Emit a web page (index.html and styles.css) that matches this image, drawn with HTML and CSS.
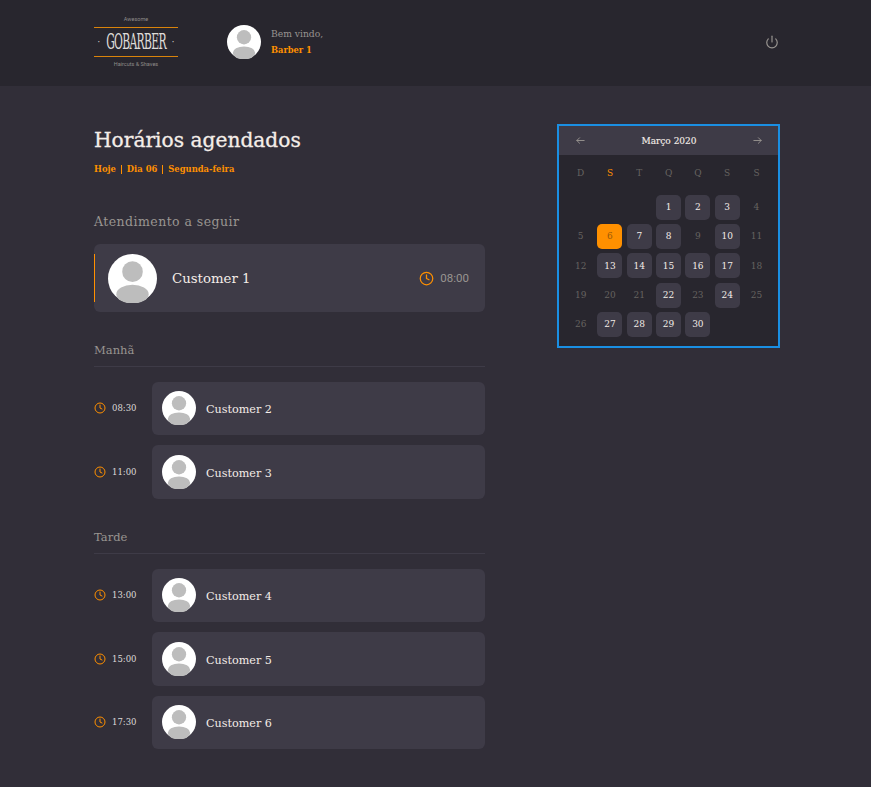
FILE: index.html
```html
<!DOCTYPE html>
<html lang="pt-BR">
<head>
  <meta charset="UTF-8" />
  <title>GoBarber</title>
  <link rel="stylesheet" href="styles.css">
</head>
<body>
  <svg class="defs" width="0" height="0">
    <symbol id="avatar" viewBox="0 0 100 100">
      <circle cx="50" cy="50" r="50" fill="#fff"/>
      <circle cx="50" cy="36" r="21" fill="#bdbdbd"/>
      <ellipse cx="50" cy="82" rx="33" ry="19" fill="#bdbdbd"/>
    </symbol>
    <symbol id="clock" viewBox="0 0 24 24">
      <circle cx="12" cy="12" r="10" fill="none" stroke="#ff9000" stroke-width="2"/>
      <path d="M12 6v6l4 2" fill="none" stroke="#ff9000" stroke-width="2" stroke-linecap="round" stroke-linejoin="round"/>
    </symbol>
  </svg>

  <header class="header">
    <div class="header-inner">
      <div class="logo">
        <span class="logo-top">Awesome</span>
        <div class="logo-name"><i>·</i><b>GOBARBER</b><i>·</i></div>
        <span class="logo-bottom">Haircuts &amp; Shaves</span>
      </div>
      <svg class="header-avatar"><use href="#avatar"/></svg>
      <div class="welcome">
        <span>Bem vindo,</span>
        <strong>Barber 1</strong>
      </div>
      <svg class="power" viewBox="0 0 24 24" fill="none" stroke="#999591" stroke-width="2" stroke-linecap="round" stroke-linejoin="round">
        <path d="M18.36 6.64a9 9 0 1 1-12.73 0"/>
        <path d="M12 2v10"/>
      </svg>
    </div>
  </header>

  <main class="content">
    <section class="schedule">
      <h1>Horários agendados</h1>
      <p class="today"><span>Hoje</span><span>Dia 06</span><span>Segunda-feira</span></p>

      <h4 class="next-title">Atendimento a seguir</h4>
      <div class="next">
        <svg class="next-avatar"><use href="#avatar"/></svg>
        <strong>Customer 1</strong>
        <span class="next-time"><svg class="clock-big"><use href="#clock"/></svg>08:00</span>
      </div>

      <h5 class="period">Manhã</h5>
      <div class="appointment">
        <span class="time"><svg class="clock"><use href="#clock"/></svg>08:30</span>
        <div class="card"><svg class="card-avatar"><use href="#avatar"/></svg><strong>Customer 2</strong></div>
      </div>
      <div class="appointment">
        <span class="time"><svg class="clock"><use href="#clock"/></svg>11:00</span>
        <div class="card"><svg class="card-avatar"><use href="#avatar"/></svg><strong>Customer 3</strong></div>
      </div>

      <h5 class="period period-afternoon">Tarde</h5>
      <div class="appointment">
        <span class="time"><svg class="clock"><use href="#clock"/></svg>13:00</span>
        <div class="card"><svg class="card-avatar"><use href="#avatar"/></svg><strong>Customer 4</strong></div>
      </div>
      <div class="appointment">
        <span class="time"><svg class="clock"><use href="#clock"/></svg>15:00</span>
        <div class="card"><svg class="card-avatar"><use href="#avatar"/></svg><strong>Customer 5</strong></div>
      </div>
      <div class="appointment">
        <span class="time"><svg class="clock"><use href="#clock"/></svg>17:30</span>
        <div class="card"><svg class="card-avatar"><use href="#avatar"/></svg><strong>Customer 6</strong></div>
      </div>
    </section>

    <aside class="calendar">
      <div class="cal-head">
        <svg class="arrow" viewBox="0 0 24 24" fill="none" stroke="#999591" stroke-width="2" stroke-linecap="round" stroke-linejoin="round"><path d="M20 12H4M10 6l-6 6 6 6"/></svg>
        <span>Março 2020</span>
        <svg class="arrow" viewBox="0 0 24 24" fill="none" stroke="#999591" stroke-width="2" stroke-linecap="round" stroke-linejoin="round"><path d="M4 12h16M14 6l6 6-6 6"/></svg>
      </div>
      <div class="cal-week">
        <span>D</span><span class="week-today">S</span><span>T</span><span>Q</span><span>Q</span><span>S</span><span>S</span>
      </div>
      <div class="cal-days">
        <span></span><span></span><span></span>
        <span class="on">1</span><span class="on">2</span><span class="on">3</span><span>4</span>
        <span>5</span><span class="selected">6</span><span class="on">7</span><span class="on">8</span><span>9</span><span class="on">10</span><span>11</span>
        <span>12</span><span class="on">13</span><span class="on">14</span><span class="on">15</span><span class="on">16</span><span class="on">17</span><span>18</span>
        <span>19</span><span>20</span><span>21</span><span class="on">22</span><span>23</span><span class="on">24</span><span>25</span>
        <span>26</span><span class="on">27</span><span class="on">28</span><span class="on">29</span><span class="on">30</span>
      </div>
    </aside>
  </main>
</body>
</html>
```

FILE: styles.css
```css
* {
  box-sizing: border-box;
}

body {
  margin: 0;
  background-color: #312e38;
  color: #f4ede8;
  font-family: "DejaVu Serif", "Liberation Serif", serif;
}

.defs {
  position: absolute;
}

/* header */
.header {
  height: 86px;
  background-color: #28262e;
  padding: 0 92px 2px 94px;
}

.header-inner {
  height: 100%;
  display: flex;
  align-items: center;
}

.logo {
  width: 84px;
  display: flex;
  flex-direction: column;
  align-items: center;
  color: #8f8c8a;
  font-size: 5.5px;
  line-height: 7px;
  font-family: Roboto, sans-serif;
}

.logo-name {
  width: 100%;
  height: 30px;
  margin: 4px 0;
  border-top: 1px solid #d9830b;
  border-bottom: 1px solid #d9830b;
  display: flex;
  align-items: center;
  justify-content: center;
  gap: 6px;
  color: #dedbd8;
}

.logo-name i {
  font-style: normal;
  font-size: 10px;
}

.logo-name b {
  font-family: "DejaVu Serif Condensed", "DejaVu Serif", serif;
  font-weight: 400;
  font-size: 12px;
  letter-spacing: -0.7px;
  transform: scaleY(1.8);
}

.header-avatar {
  width: 34px;
  height: 34px;
  margin-left: 49px;
}

.welcome {
  margin-left: 10px;
  display: flex;
  flex-direction: column;
  gap: 4px;
  font-size: 9.2px;
  line-height: 13px;
  color: #999591;
}

.welcome strong {
  color: #ff9000;
  font-size: 8.3px;
  font-weight: 700;
}

.power {
  width: 14px;
  height: 14px;
  margin-left: auto;
}

/* page */
.content {
  display: flex;
  align-items: flex-start;
  justify-content: space-between;
  padding: 37px 91px 0 94px;
}

.schedule {
  width: 391px;
}

h1 {
  margin: 4px 0 0;
  font-size: 20.2px;
  line-height: 27px;
  font-weight: 400;
  -webkit-text-stroke: 0.3px #f4ede8;
}

.today {
  margin: 8px 0 0;
  display: flex;
  color: #ff9000;
  font-size: 8.4px;
  line-height: 14px;
  font-weight: 700;
}

.today span + span {
  margin-left: 5px;
  padding-left: 6px;
  position: relative;
}

.today span + span::before {
  content: "";
  position: absolute;
  left: 0;
  top: 3px;
  height: 9px;
  border-left: 1px solid #ff9000;
}

.next-title {
  margin: 38px 0 0;
  font-size: 12.5px;
  line-height: 16px;
  letter-spacing: 0.45px;
  font-weight: 400;
  color: #999591;
}

.next {
  margin-top: 14px;
  height: 68px;
  border-radius: 6px;
  background-color: #3e3b47;
  display: flex;
  align-items: center;
  padding: 0 16px 0 14px;
  position: relative;
}

.next::before {
  content: "";
  position: absolute;
  left: 0;
  top: 10px;
  bottom: 10px;
  border-left: 1px solid #ff9000;
}

.next-avatar {
  width: 49px;
  height: 49px;
}

.next strong {
  margin-left: 15px;
  font-size: 13.3px;
  font-weight: 400;
}

.next-time {
  margin-left: auto;
  display: flex;
  align-items: center;
  gap: 6px;
  color: #999591;
  font-family: Roboto, sans-serif;
  font-size: 11.5px;
}

.clock-big {
  width: 15px;
  height: 15px;
}

.period {
  margin: 30px 0 0;
  padding-bottom: 8px;
  border-bottom: 1px solid #3e3b47;
  font-size: 11.5px;
  line-height: 16px;
  font-weight: 400;
  color: #999591;
}

.period-afternoon {
  margin-top: 30.5px;
}

.appointment {
  display: flex;
  align-items: center;
  margin-top: 10px;
}

.period + .appointment {
  margin-top: 14.5px;
}

.time {
  width: 58px;
  display: flex;
  align-items: center;
  gap: 6px;
  font-size: 8.5px;
  color: #dedbd8;
}

.clock {
  width: 12px;
  height: 12px;
}

.card {
  flex: 1;
  height: 53.5px;
  border-radius: 6px;
  background-color: #3e3b47;
  display: flex;
  align-items: center;
  padding-left: 10px;
}

.card-avatar {
  width: 34px;
  height: 34px;
}

.card strong {
  margin: 3px 0 0 10px;
  font-size: 11.2px;
  font-weight: 400;
}

/* calendar */
.calendar {
  width: 223px;
  height: 224px;
  background-color: #28262e;
  border: 2px solid #1a8fe3;
  margin-top: 1px;
}

.cal-head {
  height: 29px;
  background-color: #3e3b47;
  display: flex;
  align-items: center;
  justify-content: space-between;
  padding: 0 15px 0 16px;
  font-size: 9px;
  color: #f4ede8;
}

.cal-head span {
  -webkit-text-stroke: 0.15px #f4ede8;
}

.arrow {
  width: 11px;
  height: 11px;
}

.cal-week,
.cal-days {
  display: grid;
  grid-template-columns: repeat(7, 25px);
  column-gap: 4.3px;
  padding-left: 9.2px;
  justify-items: center;
}

.cal-week {
  margin-top: 11px;
  font-size: 9px;
  line-height: 14px;
  color: #666360;
}

.week-today {
  color: #ff9000;
}

.cal-days {
  margin-top: 14.7px;
  row-gap: 4.3px;
  font-size: 9px;
  color: #666360;
}

.cal-days span {
  width: 25px;
  height: 25px;
  display: flex;
  align-items: center;
  justify-content: center;
  border-radius: 5px;
}

.cal-days .on {
  background-color: #3e3b47;
  color: #f4ede8;
}

.cal-days .selected {
  background-color: #ff9000;
  color: #9a5a08;
}
```
